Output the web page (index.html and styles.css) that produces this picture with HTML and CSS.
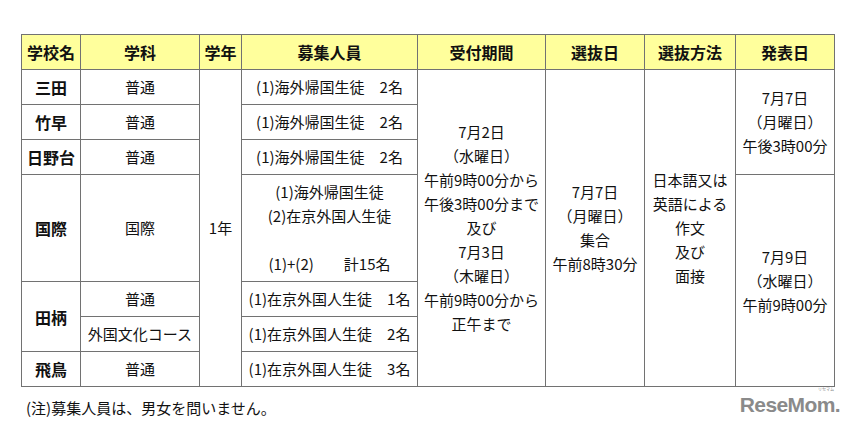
FILE: index.html
```html
<!DOCTYPE html>
<html lang="ja">
<head>
<meta charset="utf-8">
<link rel="stylesheet" href="styles.css">
</head>
<body>
<div class="page">
  <table class="sched">
    <colgroup>
      <col class="c1"><col class="c2"><col class="c3"><col class="c4">
      <col class="c5"><col class="c6"><col class="c7"><col class="c8">
    </colgroup>
    <thead>
      <tr class="r-std">
        <th>学校名</th><th>学科</th><th>学年</th><th>募集人員</th>
        <th>受付期間</th><th>選抜日</th><th>選抜方法</th><th>発表日</th>
      </tr>
    </thead>
    <tbody>
      <tr class="r-std">
        <td class="school">三田</td>
        <td>普通</td>
        <td rowspan="7">1年</td>
        <td>(1)海外帰国生徒　2名</td>
        <td rowspan="7" class="multi">7月2日<br>（水曜日）<br>午前9時00分から<br>午後3時00分まで<br>及び<br>7月3日<br>（木曜日）<br>午前9時00分から<br>正午まで</td>
        <td rowspan="7" class="multi">7月7日<br>（月曜日）<br>集合<br>午前8時30分</td>
        <td rowspan="7" class="multi">日本語又は<br>英語による<br>作文<br>及び<br>面接</td>
        <td rowspan="3" class="multi">7月7日<br>（月曜日）<br>午後3時00分</td>
      </tr>
      <tr class="r-std">
        <td class="school">竹早</td>
        <td>普通</td>
        <td>(1)海外帰国生徒　2名</td>
      </tr>
      <tr class="r-std">
        <td class="school">日野台</td>
        <td>普通</td>
        <td>(1)海外帰国生徒　2名</td>
      </tr>
      <tr class="r-tall">
        <td class="school">国際</td>
        <td>国際</td>
        <td class="multi">(1)海外帰国生徒<br>(2)在京外国人生徒<br>&nbsp;<br>(1)+(2)　　計15名</td>
        <td rowspan="4" class="multi">7月9日<br>（水曜日）<br>午前9時00分</td>
      </tr>
      <tr class="r-std">
        <td rowspan="2" class="school">田柄</td>
        <td>普通</td>
        <td>(1)在京外国人生徒　1名</td>
      </tr>
      <tr class="r-std">
        <td>外国文化コース</td>
        <td>(1)在京外国人生徒　2名</td>
      </tr>
      <tr class="r-std">
        <td class="school">飛鳥</td>
        <td>普通</td>
        <td>(1)在京外国人生徒　3名</td>
      </tr>
    </tbody>
  </table>
  <div class="foot">
    <p class="note">(注)募集人員は、男女を問いません。</p>
    <div class="logo">ReseMom.<span class="ruby">リセマム</span></div>
  </div>
</div>
</body>
</html>
```

FILE: styles.css
```css
html, body {
  margin: 0;
  padding: 0;
  background: #ffffff;
}

.page {
  padding: 34px 0 0 21px;
  font-family: "Noto Sans CJK JP", "Noto Sans", sans-serif;
  color: #111;
}

.sched {
  border-collapse: collapse;
  table-layout: fixed;
  width: 814px;
  font-size: 15px;
}

.sched .c1 { width: 59px; }
.sched .c2 { width: 119px; }
.sched .c3 { width: 42px; }
.sched .c4 { width: 176px; }
.sched .c5 { width: 128px; }
.sched .c6 { width: 99px; }
.sched .c7 { width: 91px; }
.sched .c8 { width: 99px; }

.sched th,
.sched td {
  border: 1px solid #727272;
  padding: 0;
  text-align: center;
  vertical-align: middle;
  line-height: 24px;
  white-space: nowrap;
  overflow: hidden;
}

.sched th {
  background: #ffff9c;
  font-size: 16px;
  font-weight: bold;
}

.sched .school {
  font-size: 16px;
  font-weight: bold;
}

.r-std { height: 35px; }
.r-tall { height: 107px; }

.foot {
  width: 819px;
  display: flex;
  justify-content: space-between;
  align-items: flex-start;
}

.note {
  margin: 9px 0 0 5px;
  font-size: 15px;
  line-height: 24px;
}

.logo {
  position: relative;
  margin-top: 10px;
  font-family: "Liberation Sans", Arial, sans-serif;
  font-weight: bold;
  font-size: 21px;
  letter-spacing: -0.6px;
  line-height: 16px;
  color: #8a8a8a;
}

.ruby {
  position: absolute;
  right: 6px;
  top: -10px;
  font-family: "Noto Sans CJK JP", sans-serif;
  font-size: 4px;
  letter-spacing: 0;
  line-height: 4px;
  font-weight: normal;
}
```
